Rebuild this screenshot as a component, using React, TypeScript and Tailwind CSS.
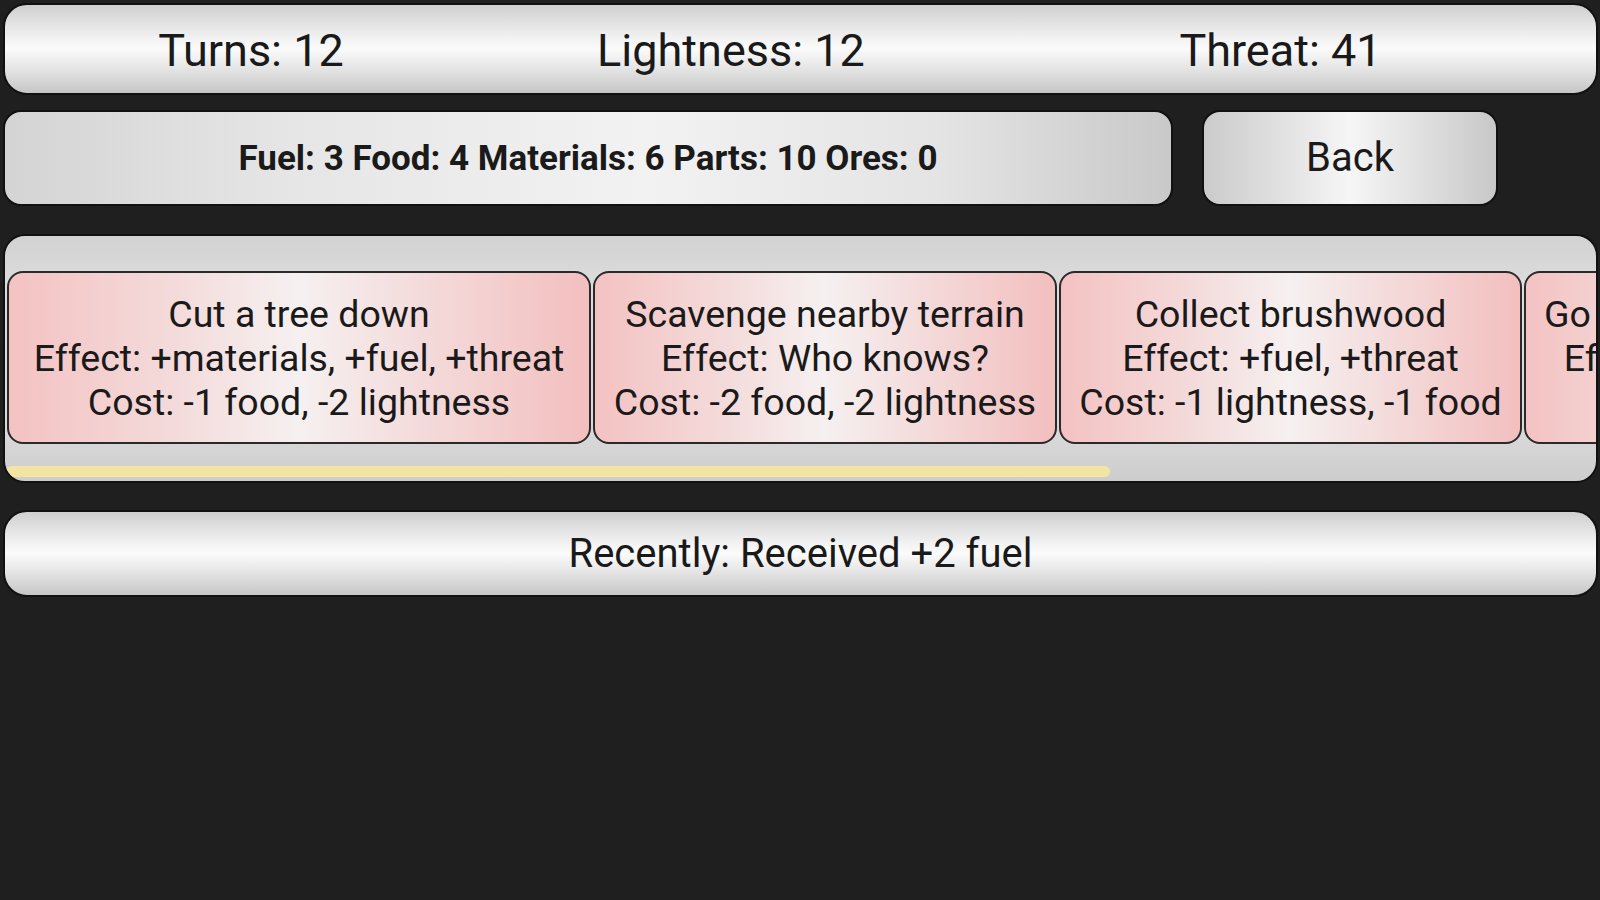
import React from 'react';

const actions = [
  { id: 'tree', w: 'w-[584px]', lines: ['Cut a tree down', 'Effect: +materials, +fuel, +threat', 'Cost: -1 food, -2 lightness'] },
  { id: 'scavenge', w: 'w-[464px]', lines: ['Scavenge nearby terrain', 'Effect: Who knows?', 'Cost: -2 food, -2 lightness'] },
  { id: 'brush', w: 'w-[463px]', lines: ['Collect brushwood', 'Effect: +fuel, +threat', 'Cost: -1 lightness, -1 food'] },
  { id: 'hunt', w: 'w-auto px-[18px]', lines: ['Go hunting in the forest', 'Effect: +food, +threat', 'Cost: -3 food'] },
];

const App: React.FC = () => {
  return (
    <div className="w-[1600px] h-[900px] bg-[#1f1f1f] overflow-hidden font-['Roboto',sans-serif] text-[#1a1a1a] pt-[3px] pl-[3px] pr-[2px]">
      {/* stats bar */}
      <div className="h-[92px] flex items-center rounded-[24px] border-2 border-[#111] bg-[linear-gradient(to_bottom,#cfcfcf_0%,#f4f4f4_40%,#fbfbfb_50%,#e2e2e2_75%,#c6c6c6_100%)] text-[45px] leading-none">
        <div className="w-[492px] text-center pt-[3px]">Turns: 12</div>
        <div className="w-[468px] text-center pt-[3px]">Lightness: 12</div>
        <div className="flex-1 text-center pt-[3px]">Threat: 41</div>
      </div>

      {/* resources + back */}
      <div className="flex mt-[15px] h-[96px]">
        <div className="w-[1170px] flex items-center justify-center rounded-[18px] border-2 border-[#111] bg-[linear-gradient(to_right,#d4d4d4_0%,#e6e6e6_25%,#f2f2f2_55%,#e4e4e4_80%,#c9c9c9_100%)] text-[35px] font-bold leading-none">
          Fuel: 3 Food: 4 Materials: 6 Parts: 10 Ores: 0
        </div>
        <button className="ml-[29px] w-[296px] flex items-center justify-center rounded-[18px] border-2 border-[#111] bg-[linear-gradient(to_right,#cbcbcb_0%,#e4e4e4_30%,#f6f6f6_50%,#e2e2e2_72%,#c8c8c8_100%)] text-[40px] leading-none text-[#1a1a1a]">
          Back
        </button>
      </div>

      {/* actions panel */}
      <div className="mt-[28px] h-[249px] rounded-[22px] border-2 border-[#111] bg-[linear-gradient(to_bottom,#d2d2d2_0%,#dcdcdc_20%,#d9d9d9_80%,#cdcdcd_100%)] overflow-hidden flex flex-col">
        <div className="flex gap-[2px] pl-[2px] pt-[35px] overflow-hidden">
          {actions.map((a) => (
            <div
              key={a.id}
              className={`${a.w} flex-none h-[173px] rounded-[16px] border-2 border-[#2a2a2a] bg-[linear-gradient(to_right,#f4c2c2_0%,#f4dcdc_30%,#f6f0f0_50%,#f4dada_72%,#f3bfbf_100%)] flex flex-col items-center justify-center text-[37.5px] leading-[44px] whitespace-nowrap`}
            >
              {a.lines.map((l) => (
                <div key={l}>{l}</div>
              ))}
            </div>
          ))}
        </div>
        <div className="mt-[22px] ml-[1px] w-[1104px] h-[11px] rounded-full bg-[#f4e4a2]" />
      </div>

      {/* recent message */}
      <div className="mt-[27px] h-[87px] flex items-center justify-center rounded-[24px] border-2 border-[#111] bg-[linear-gradient(to_bottom,#cfcfcf_0%,#f4f4f4_40%,#fbfbfb_50%,#e2e2e2_75%,#c6c6c6_100%)] text-[40px] leading-none">
        Recently: Received +2 fuel
      </div>
    </div>
  );
};

export default App;
